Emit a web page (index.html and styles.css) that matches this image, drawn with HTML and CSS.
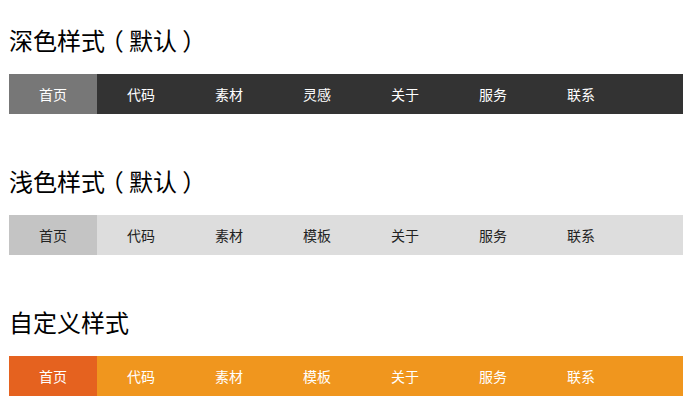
FILE: index.html
```html
<!DOCTYPE html>
<html lang="zh-CN">
<head>
<meta charset="utf-8">
<link rel="stylesheet" href="styles.css">
</head>
<body>
<div class="page">
  <section class="demo">
    <h2 class="title">深色样式<span class="paren">（</span>默认<span class="paren">）</span></h2>
    <ul class="nav nav-dark">
      <li class="active">首页</li><li>代码</li><li>素材</li><li>灵感</li><li>关于</li><li>服务</li><li>联系</li>
    </ul>
  </section>
  <section class="demo">
    <h2 class="title">浅色样式<span class="paren">（</span>默认<span class="paren">）</span></h2>
    <ul class="nav nav-light">
      <li class="active">首页</li><li>代码</li><li>素材</li><li>模板</li><li>关于</li><li>服务</li><li>联系</li>
    </ul>
  </section>
  <section class="demo">
    <h2 class="title">自定义样式</h2>
    <ul class="nav nav-orange">
      <li class="active">首页</li><li>代码</li><li>素材</li><li>模板</li><li>关于</li><li>服务</li><li>联系</li>
    </ul>
  </section>
</div>
</body>
</html>
```
FILE: styles.css
```css
html, body {
  margin: 0;
  padding: 0;
  background: #fff;
}
body {
  font-family: "Noto Sans CJK SC", "Noto Sans", sans-serif;
  overflow: hidden;
}
.page {
  padding: 20px 0 0 9px;
  display: flex;
  flex-direction: column;
  gap: 47px;
}
.demo {
  display: flex;
  flex-direction: column;
  gap: 14px;
}
.title {
  margin: 0;
  font-size: 24px;
  font-weight: normal;
  line-height: 40px;
  color: #000;
}
.paren {
  display: inline-block;
  width: 24px;
  text-align: center;
  font-feature-settings: "palt" 1;
}
.nav {
  list-style: none;
  margin: 0;
  padding: 0;
  display: flex;
  height: 40px;
}
.nav li {
  width: 88px;
  flex: none;
  display: flex;
  align-items: center;
  justify-content: center;
  font-size: 14px;
  color: #fff;
}
.nav-dark { background: #333333; }
.nav-dark .active { background: #777777; }
.nav-light { background: #dddddd; }
.nav-light li { color: #222; }
.nav-light .active { background: #c4c4c4; }
.nav-orange { background: #f0961e; }
.nav-orange .active { background: #e5621f; }
```
